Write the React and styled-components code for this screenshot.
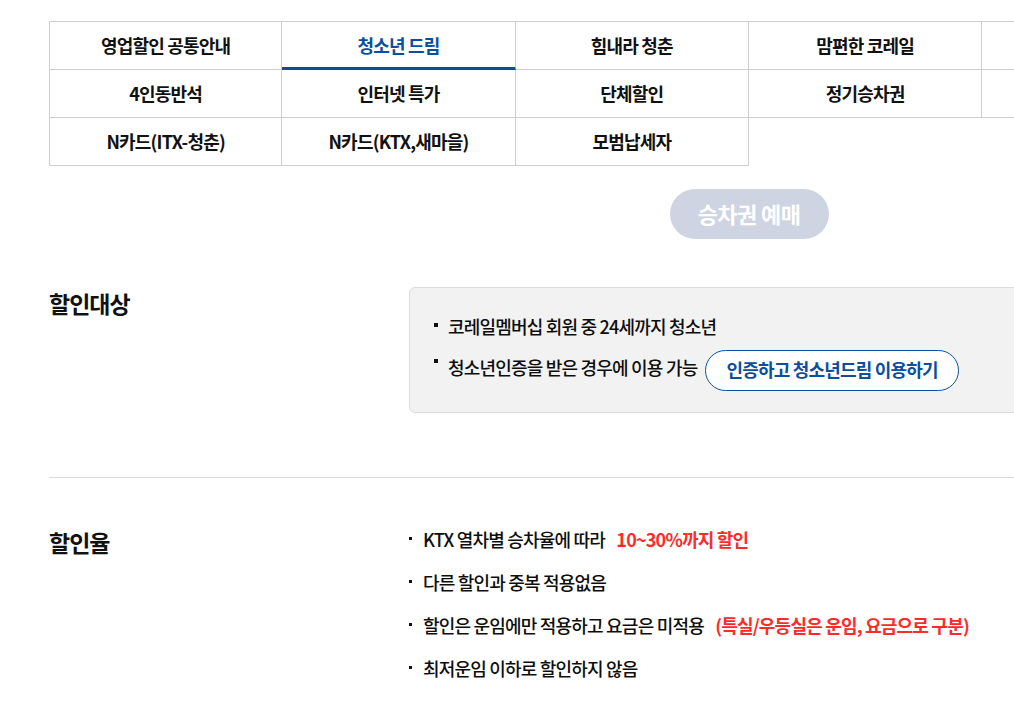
import React from 'react';
import styled, { createGlobalStyle } from 'styled-components';

const GlobalStyle = createGlobalStyle`
  html, body {
    margin: 0;
    padding: 0;
    overflow-x: hidden;
    background: #fff;
  }
  body {
    font-family: "Noto Sans CJK KR", "Noto Sans", sans-serif;
    color: #111;
    letter-spacing: -0.8px;
  }
`;

const Page = styled.div`
  width: 1400px;
  padding: 21px 0 40px 49px;
`;

const TabGrid = styled.ul`
  list-style: none;
  margin: 0;
  padding: 0;
  display: grid;
  grid-template-columns: repeat(6, 1fr);
  border-top: 1px solid #cfcfcf;
`;

const Tab = styled.li`
  box-sizing: border-box;
  height: 48px;
  display: flex;
  align-items: center;
  justify-content: center;
  padding-bottom: 2px;
  font-size: 18px;
  font-weight: 700;
  color: ${p => (p.$active ? '#0a4f9e' : '#111')};
  border-right: 1px solid #cfcfcf;
  border-bottom: ${p => (p.$active ? '3px solid #0a4f9e' : '1px solid #cfcfcf')};
  padding-top: ${p => (p.$active ? '2px' : '0')};
  &:nth-child(6n + 1) {
    border-left: 1px solid #cfcfcf;
  }
`;

const ButtonRow = styled.div`
  display: flex;
  justify-content: center;
  margin-top: 23px;
`;

const ReserveButton = styled.button`
  width: 159px;
  height: 50px;
  padding: 0 0 2px;
  border: none;
  border-radius: 25px;
  background: #cfd4e2;
  color: #fff;
  font-family: inherit;
  font-size: 22px;
  font-weight: 700;
  letter-spacing: -0.6px;
`;

const Section = styled.section`
  display: grid;
  grid-template-columns: 360px 1fr;
  padding: ${p => p.$pad};
  border-bottom: ${p => (p.$line ? '1px solid #dcdcdc' : 'none')};
`;

const Heading = styled.h3`
  margin: ${p => p.$top || 0} 0 0;
  font-size: 23px;
  line-height: 32px;
  font-weight: 700;
  letter-spacing: -1px;
  color: #111;
`;

const InfoBox = styled.div`
  background: #f2f2f2;
  border: 1px solid #dcdcdc;
  border-radius: 6px;
  padding: 25px 24px 21px;
`;

const List = styled.ul`
  list-style: none;
  margin: 0;
  padding: 0;
  display: flex;
  flex-direction: column;
  gap: ${p => p.$gap};
`;

const Item = styled.li`
  position: relative;
  padding-left: ${p => p.$indent};
  font-size: 18px;
  font-weight: 500;
  color: #0d0d0d;
  line-height: ${p => p.$lh};
  &::before {
    content: '';
    position: absolute;
    left: 0;
    top: ${p => p.$dot};
    width: ${p => p.$size};
    height: ${p => p.$size};
    background: #111;
  }
`;

const OutlineButton = styled.button`
  height: 41px;
  margin-left: 8px;
  padding: 0 20px 2px;
  border: 1px solid #0a4f9e;
  border-radius: 21px;
  background: #fff;
  color: #0a4f9e;
  font-family: inherit;
  font-size: 18px;
  font-weight: 700;
  letter-spacing: -0.8px;
  vertical-align: middle;
`;

const Red = styled.strong`
  margin-left: 8px;
  color: #ff2a2a;
  font-weight: 700;
`;

const tabs = [
  ['영업할인 공통안내'],
  ['청소년 드림', true],
  ['힘내라 청춘'],
  ['맘편한 코레일'],
  [''],
  [''],
  ['4인동반석'],
  ['인터넷 특가'],
  ['단체할인'],
  ['정기승차권'],
  [''],
  [''],
  ['N카드(ITX-청춘)'],
  ['N카드(KTX,새마을)'],
  ['모범납세자'],
];

export default function App() {
  return (
    <>
      <GlobalStyle />
      <Page>
        <TabGrid>
          {tabs.map(([label, active], i) => (
            <Tab key={i} $active={active}>{label}</Tab>
          ))}
        </TabGrid>

        <ButtonRow>
          <ReserveButton>승차권 예매</ReserveButton>
        </ButtonRow>

        <Section $pad="48px 0 64px" $line>
          <Heading>할인대상</Heading>
          <InfoBox>
            <List $gap="8px">
              <Item $indent="14px" $lh="26px" $dot="10px" $size="4px">
                코레일멤버십 회원 중 24세까지 청소년
              </Item>
              <Item $indent="14px" $lh="41px" $dot="12px" $size="4px">
                청소년인증을 받은 경우에 이용 가능
                <OutlineButton>인증하고 청소년드림 이용하기</OutlineButton>
              </Item>
            </List>
          </InfoBox>
        </Section>

        <Section $pad="47px 0 0">
          <Heading $top="1px">할인율</Heading>
          <List $gap="15px">
            <Item $indent="14px" $lh="28px" $dot="12px" $size="3px">
              KTX 열차별 승차율에 따라 <Red>10~30%까지 할인</Red>
            </Item>
            <Item $indent="14px" $lh="28px" $dot="12px" $size="3px">
              다른 할인과 중복 적용없음
            </Item>
            <Item $indent="14px" $lh="28px" $dot="12px" $size="3px">
              할인은 운임에만 적용하고 요금은 미적용 <Red>(특실/우등실은 운임, 요금으로 구분)</Red>
            </Item>
            <Item $indent="14px" $lh="28px" $dot="12px" $size="3px">
              최저운임 이하로 할인하지 않음
            </Item>
          </List>
        </Section>
      </Page>
    </>
  );
}
